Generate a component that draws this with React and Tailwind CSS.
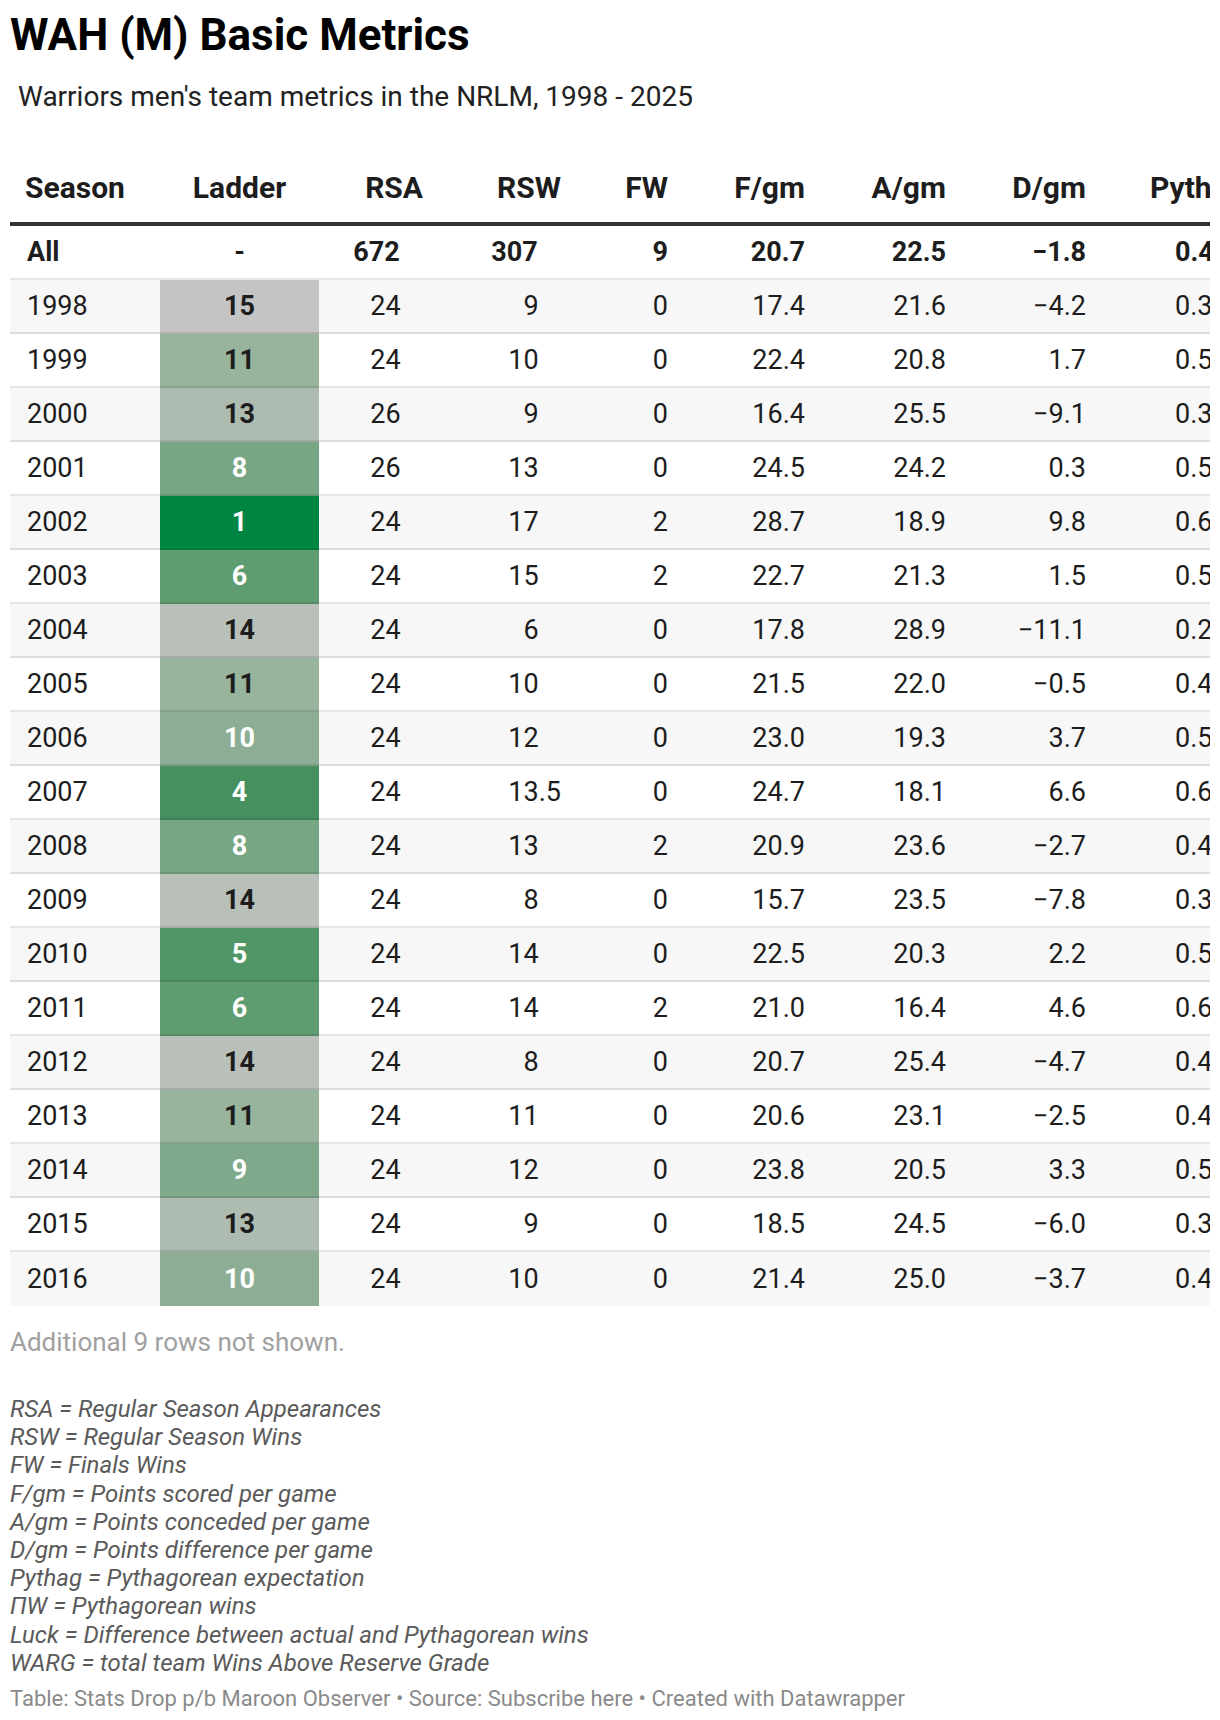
import React from 'react';

const rows = [
    ['1998', 15, '24', '9', '0', '17.4', '21.6', '−4.2', '0.39'],
    ['1999', 11, '24', '10', '0', '22.4', '20.8', '1.7', '0.54'],
    ['2000', 13, '26', '9', '0', '16.4', '25.5', '−9.1', '0.31'],
    ['2001', 8, '26', '13', '0', '24.5', '24.2', '0.3', '0.50'],
    ['2002', 1, '24', '17', '2', '28.7', '18.9', '9.8', '0.68'],
    ['2003', 6, '24', '15', '2', '22.7', '21.3', '1.5', '0.53'],
    ['2004', 14, '24', '6', '0', '17.8', '28.9', '−11.1', '0.29'],
    ['2005', 11, '24', '10', '0', '21.5', '22.0', '−0.5', '0.49'],
    ['2006', 10, '24', '12', '0', '23.0', '19.3', '3.7', '0.58'],
    ['2007', 4, '24', '13.5', '0', '24.7', '18.1', '6.6', '0.64'],
    ['2008', 8, '24', '13', '2', '20.9', '23.6', '−2.7', '0.44'],
    ['2009', 14, '24', '8', '0', '15.7', '23.5', '−7.8', '0.32'],
    ['2010', 5, '24', '14', '0', '22.5', '20.3', '2.2', '0.55'],
    ['2011', 6, '24', '14', '2', '21.0', '16.4', '4.6', '0.61'],
    ['2012', 14, '24', '8', '0', '20.7', '25.4', '−4.7', '0.41'],
    ['2013', 11, '24', '11', '0', '20.6', '23.1', '−2.5', '0.45'],
    ['2014', 9, '24', '12', '0', '23.8', '20.5', '3.3', '0.57'],
    ['2015', 13, '24', '9', '0', '18.5', '24.5', '−6.0', '0.37'],
    ['2016', 10, '24', '10', '0', '21.4', '25.0', '−3.7', '0.43'],
];

const ladderBg = {
    1: 'bg-[#008542] text-white',
    4: 'bg-[#45905e] text-white',
    5: 'bg-[#519666] text-white',
    6: 'bg-[#5e9c71] text-white',
    8: 'bg-[#76a683] text-white',
    9: 'bg-[#7fa98a] text-white',
    10: 'bg-[#8dad94] text-white',
    11: 'bg-[#98b49d] text-[#1d1d1d]',
    13: 'bg-[#adbbb0] text-[#1d1d1d]',
    14: 'bg-[#b8c0b9] text-[#1d1d1d]',
    15: 'bg-[#c4c4c4] text-[#1d1d1d]',
};

const notes = [
    'RSA = Regular Season Appearances',
    'RSW = Regular Season Wins',
    'FW = Finals Wins',
    'F/gm = Points scored per game',
    'A/gm = Points conceded per game',
    'D/gm = Points difference per game',
    'Pythag = Pythagorean expectation',
    'ΠW = Pythagorean wins',
    'Luck = Difference between actual and Pythagorean wins',
    'WARG = total team Wins Above Reserve Grade',
];

// integers in decimal-aligned columns get an invisible ".0" tail
const Dec = ({ v }) => (
    <>
        {v}
        {v.indexOf('.') === -1 && <span className="invisible">.0</span>}
    </>
);

function Row({ cells, ladder, bold, shaded, last }) {
    const cell = `h-[54px] flex items-center ${last ? '' : 'border-b-2 border-black/10'}`;
    return (
        <div className={`flex ${shaded ? 'bg-[#f7f7f7]' : 'bg-white'} ${bold ? 'font-bold' : ''}`}>
            <div className={`${cell} w-[150px] shrink-0 pl-[17px]`}>{cells[0]}</div>
            <div className={`${cell} w-[159px] shrink-0 justify-center font-bold ${ladder ? ladderBg[ladder] : ''}`}>
                {ladder || '-'}
            </div>
            <div className={`${cell} w-[104px] shrink-0 justify-end`}><Dec v={cells[2]} /></div>
            <div className={`${cell} w-[138px] shrink-0 justify-end`}><Dec v={cells[3]} /></div>
            <div className={`${cell} w-[107px] shrink-0 justify-end`}>{cells[4]}</div>
            <div className={`${cell} w-[137px] shrink-0 justify-end`}>{cells[5]}</div>
            <div className={`${cell} w-[141px] shrink-0 justify-end`}>{cells[6]}</div>
            <div className={`${cell} w-[140px] shrink-0 justify-end`}>{cells[7]}</div>
            <div className={`${cell} w-[300px] shrink-0 pl-[89px]`}>{cells[8]}</div>
        </div>
    );
}

export default function App() {
    return (
        <div className="w-[1220px] bg-white px-[10px] pt-[10px] pb-[10px] text-[#1d1d1d]" style={{ fontFamily: 'Roboto, "Liberation Sans", sans-serif' }}>
            <h1 className="text-[44px] leading-[50px] font-bold text-black">WAH (M) Basic Metrics</h1>
            <p className="mt-[20px] pl-[8px] text-[28px] leading-[34px] text-[#222]">
                Warriors men's team metrics in the NRLM, 1998 - 2025
            </p>

            <div className="mt-[57px] w-[1200px] overflow-hidden text-[27px]">
                <div className="w-[1400px]">
                    <div className="flex font-bold text-[30px] leading-[34px] pb-[17px] border-b-4 border-[#333]">
                        <div className="w-[150px] shrink-0 pl-[15px]">Season</div>
                        <div className="w-[159px] shrink-0 text-center">Ladder</div>
                        <div className="w-[104px] shrink-0 text-right">RSA</div>
                        <div className="w-[138px] shrink-0 text-right">RSW</div>
                        <div className="w-[107px] shrink-0 text-right">FW</div>
                        <div className="w-[137px] shrink-0 text-right">F/gm</div>
                        <div className="w-[141px] shrink-0 text-right">A/gm</div>
                        <div className="w-[140px] shrink-0 text-right">D/gm</div>
                        <div className="w-[300px] shrink-0 pl-[64px]">Pythag</div>
                    </div>
                    <Row cells={['All', '-', '672', '307', '9', '20.7', '22.5', '−1.8', '0.46']} bold />
                    {rows.map((r, i) => (
                        <Row key={r[0]} cells={r} ladder={r[1]} shaded={i % 2 === 0} last={i === rows.length - 1} />
                    ))}
                </div>
            </div>

            <p className="mt-[21px] text-[26px] leading-[30px] text-[#a0a0a0]">Additional 9 rows not shown.</p>

            <div className="mt-[38px] text-[24px] leading-[28.2px] italic text-[#5a5a5a]">
                {notes.map((n) => (
                    <div key={n}>{n}</div>
                ))}
            </div>

            <p className="mt-[8px] text-[22px] leading-[28px] text-[#8a8a8a]">
                Table: Stats Drop p/b Maroon Observer • Source: Subscribe here • Created with Datawrapper
            </p>
        </div>
    );
}
